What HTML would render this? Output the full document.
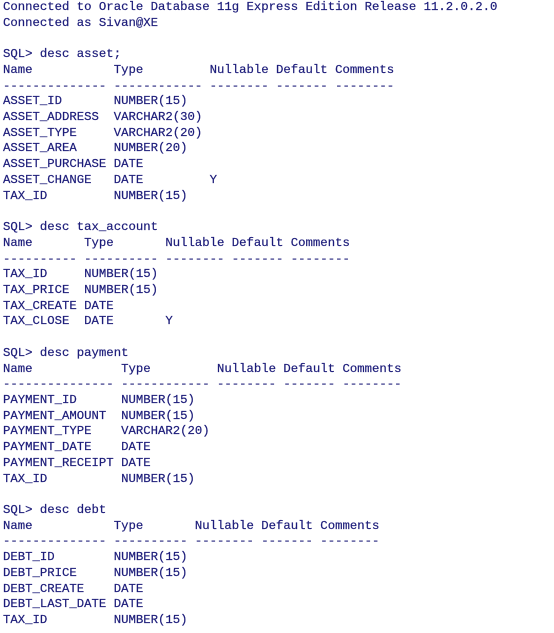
<!DOCTYPE html>
<html><head><meta charset="utf-8"><style>
html,body{margin:0;padding:0;background:#fff;width:554px;height:633px;overflow:hidden}
pre{position:absolute;left:3px;top:0px;margin:0;font-family:"Liberation Mono",monospace;font-size:12.3px;line-height:15.72px;color:#1c1c7a;-webkit-text-stroke:0.2px #1c1c7a;}
</style></head><body><pre>Connected to Oracle Database 11g Express Edition Release 11.2.0.2.0
Connected as Sivan@XE

SQL&gt; desc asset;
Name           Type         Nullable Default Comments
-------------- ------------ -------- ------- --------
ASSET_ID       NUMBER(15)
ASSET_ADDRESS  VARCHAR2(30)
ASSET_TYPE     VARCHAR2(20)
ASSET_AREA     NUMBER(20)
ASSET_PURCHASE DATE
ASSET_CHANGE   DATE         Y
TAX_ID         NUMBER(15)

SQL&gt; desc tax_account
Name       Type       Nullable Default Comments
---------- ---------- -------- ------- --------
TAX_ID     NUMBER(15)
TAX_PRICE  NUMBER(15)
TAX_CREATE DATE
TAX_CLOSE  DATE       Y

SQL&gt; desc payment
Name            Type         Nullable Default Comments
--------------- ------------ -------- ------- --------
PAYMENT_ID      NUMBER(15)
PAYMENT_AMOUNT  NUMBER(15)
PAYMENT_TYPE    VARCHAR2(20)
PAYMENT_DATE    DATE
PAYMENT_RECEIPT DATE
TAX_ID          NUMBER(15)

SQL&gt; desc debt
Name           Type       Nullable Default Comments
-------------- ---------- -------- ------- --------
DEBT_ID        NUMBER(15)
DEBT_PRICE     NUMBER(15)
DEBT_CREATE    DATE
DEBT_LAST_DATE DATE
TAX_ID         NUMBER(15)</pre></body></html>
